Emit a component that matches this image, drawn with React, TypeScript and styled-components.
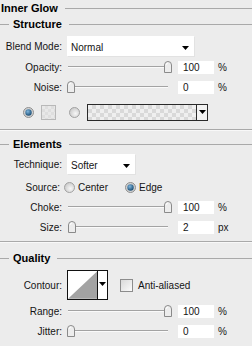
import styled, { createGlobalStyle } from 'styled-components'

const GlobalStyle = createGlobalStyle`
  html, body {
    margin: 0;
    padding: 0;
    background: #ececec;
  }
  body {
    font-family: "Liberation Sans", Arial, sans-serif;
    font-size: 10px;
    color: #141414;
  }
`

const Panel = styled.div`
  width: 252px;
  height: 346px;
  background: #ececec;
  display: flex;
  flex-direction: column;
  overflow: hidden;
`

const Header = styled.div`
  height: 16px;
  display: flex;
  align-items: center;
  gap: 7px;
  padding-left: 1px;
  font-weight: bold;
  font-size: 11px;
  color: #000;
  &::after {
    content: '';
    flex: 1;
    border-top: 1px solid #a9a9a9;
  }
`

const Legend = styled.div<{ $mt: number }>`
  height: 16px;
  margin-top: ${p => p.$mt}px;
  display: flex;
  align-items: center;
  gap: 4px;
  font-weight: bold;
  font-size: 11px;
  color: #000;
  &::before {
    content: '';
    width: 9px;
    border-top: 1px solid #a9a9a9;
  }
  &::after {
    content: '';
    flex: 1;
    margin-left: 3px;
    border-top: 1px solid #a9a9a9;
  }
`

const Divider = styled.div<{ $mt: number }>`
  margin-top: ${p => p.$mt}px;
  border-top: 1px solid #a9a9a9;
  border-bottom: 1px solid #f8f8f8;
`

const Row = styled.div<{ $mt: number; $h: number; $indent?: number }>`
  display: flex;
  align-items: center;
  margin-top: ${p => p.$mt}px;
  height: ${p => p.$h}px;
  padding-left: ${p => p.$indent ?? 0}px;
`

const Label = styled.span<{ $w?: number; $gap?: number }>`
  flex: none;
  width: ${p => p.$w ?? 62}px;
  margin-right: ${p => p.$gap ?? 5}px;
  text-align: right;
  white-space: nowrap;
`

const Select = styled.div<{ $w: number }>`
  width: ${p => p.$w}px;
  height: 20px;
  box-sizing: border-box;
  background: #fff;
  display: flex;
  align-items: center;
  padding: 3px 5px 0 4px;
  box-shadow: 1px 1px 0 #e2e2e2;
  span {
    flex: 1;
  }
`

const SliderBox = styled.div`
  position: relative;
  width: 106px;
  height: 12px;
  display: flex;
  align-items: center;
`

const Track = styled.div`
  margin: 0 5px 0 1px;
  flex: 1;
  border-top: 1px solid #a3a3a3;
  border-bottom: 1px solid #fafafa;
`

const Thumb = styled.svg`
  position: absolute;
  top: 0;
`

const NumberBox = styled.div`
  margin-left: 5px;
  width: 36px;
  height: 13px;
  box-sizing: border-box;
  background: #fff;
  padding-left: 5px;
  line-height: 14px;
`

const Unit = styled.span`
  margin-left: 4px;
`

const Swatch = styled.div`
  width: 15px;
  height: 15px;
  box-sizing: border-box;
  margin-left: 7px;
  border: 1px solid #b8b8b8;
  background: repeating-conic-gradient(#dedede 0 25%, #e8e8e8 0 50%) 0 0 / 6px 6px;
`

const GradientBox = styled.div`
  margin-left: 7px;
  width: 121px;
  height: 17px;
  box-sizing: border-box;
  border: 1px solid #2a2a2a;
  display: flex;
`

const Checker = styled.div`
  flex: 1;
  background: repeating-conic-gradient(#d9d9d9 0 25%, #efefef 0 50%) 0 0 / 8px 8px;
`

const ArrowCell = styled.div`
  width: 10px;
  border-left: 1px solid #2a2a2a;
  background: #f2f2f2;
  display: flex;
  align-items: center;
  justify-content: center;
`

const RadioOption = styled.label<{ $ml?: number }>`
  display: flex;
  align-items: center;
  gap: 3px;
  margin-left: ${p => p.$ml ?? 0}px;
`

const ContourBox = styled.div`
  width: 41px;
  height: 30px;
  box-sizing: border-box;
  border: 1px solid #111;
  display: flex;
  background: #fff;
`

const ContourArrow = styled.div`
  width: 10px;
  border-left: 1px solid #111;
  display: flex;
  justify-content: center;
  padding-top: 11px;
  box-sizing: border-box;
`

const CheckOption = styled.label`
  display: flex;
  align-items: center;
  gap: 5px;
  margin-left: 12px;
`

const CheckBox = styled.span`
  width: 13px;
  height: 13px;
  box-sizing: border-box;
  border: 1px solid #8c8c8c;
  background: linear-gradient(135deg, #d9d9d9, #fbfbfb);
`

function Arrow() {
  return (
    <svg width="7" height="4" viewBox="0 0 7 4">
      <polygon points="0,0 7,0 3.5,4" fill="#000" />
    </svg>
  )
}

function Radio({ on }: { on?: boolean }) {
  return on ? (
    <svg width="11" height="11" viewBox="0 0 11 11">
      <defs>
        <radialGradient id="rOn" cx="0.4" cy="0.35" r="0.7">
          <stop offset="0" stopColor="#7fb6de" />
          <stop offset="1" stopColor="#14476e" />
        </radialGradient>
      </defs>
      <circle cx="5.5" cy="5.5" r="5" fill="#d2d2d2" stroke="#8f8f8f" />
      <circle cx="5.5" cy="5.5" r="3.2" fill="url(#rOn)" />
    </svg>
  ) : (
    <svg width="11" height="11" viewBox="0 0 11 11">
      <defs>
        <radialGradient id="rOff" cx="0.6" cy="0.6" r="0.7">
          <stop offset="0" stopColor="#f7f7f7" />
          <stop offset="1" stopColor="#c4c4c4" />
        </radialGradient>
      </defs>
      <circle cx="5.5" cy="5.5" r="5" fill="url(#rOff)" stroke="#a2a2a2" />
    </svg>
  )
}

// pos is 0..100 along the track
function Slider({ pos }: { pos: number }) {
  return (
    <SliderBox>
      <Track />
      <Thumb width="8" height="12" viewBox="0 0 8 12" style={{ left: Math.round(pos * 0.97) }}>
        <path d="M0.5 4 Q0.5 0.5 4 0.5 Q7.5 0.5 7.5 4 V11.5 H0.5 Z" fill="#ededed" stroke="#8a8a8a" />
        <path d="M2 4 Q2 2 4 2" fill="none" stroke="#fff" />
      </Thumb>
    </SliderBox>
  )
}

function SliderRow({ label, value, pos, unit, mt }: { label: string; value: number; pos: number; unit: string; mt: number }) {
  return (
    <Row $mt={mt} $h={18}>
      <Label>{label}</Label>
      <Slider pos={pos} />
      <NumberBox>{value}</NumberBox>
      <Unit>{unit}</Unit>
    </Row>
  )
}

export default function App() {
  return (
    <Panel>
      <GlobalStyle />
      <Header>Inner Glow</Header>
      <Legend $mt={0}>Structure</Legend>
      <Row $mt={4} $h={20}>
        <Label>Blend Mode:</Label>
        <Select $w={127}>
          <span>Normal</span>
          <Arrow />
        </Select>
      </Row>
      <SliderRow label="Opacity:" value={100} pos={100} unit="%" mt={2} />
      <SliderRow label="Noise:" value={0} pos={0} unit="%" mt={2} />
      <Row $mt={7} $h={18} $indent={23}>
        <Radio on />
        <Swatch />
        <RadioOption $ml={13}>
          <Radio />
        </RadioOption>
        <GradientBox>
          <Checker />
          <ArrowCell>
            <Arrow />
          </ArrowCell>
        </GradientBox>
      </Row>
      <Divider $mt={8} />

      <Legend $mt={5}>Elements</Legend>
      <Row $mt={2} $h={20}>
        <Label>Technique:</Label>
        <Select $w={68}>
          <span>Softer</span>
          <Arrow />
        </Select>
      </Row>
      <Row $mt={4} $h={18}>
        <Label $w={60} $gap={4}>Source:</Label>
        <RadioOption>
          <Radio />
          Center
        </RadioOption>
        <RadioOption $ml={17}>
          <Radio on />
          Edge
        </RadioOption>
      </Row>
      <SliderRow label="Choke:" value={100} pos={100} unit="%" mt={2} />
      <SliderRow label="Size:" value={2} pos={1} unit="px" mt={2} />
      <Divider $mt={5} />

      <Legend $mt={7}>Quality</Legend>
      <Row $mt={4} $h={30}>
        <Label>Contour:</Label>
        <ContourBox>
          <svg width="30" height="28" viewBox="0 0 30 28">
            <polygon points="0,28 30,0 30,28" fill="#a3a3a3" />
          </svg>
          <ContourArrow>
            <Arrow />
          </ContourArrow>
        </ContourBox>
        <CheckOption>
          <CheckBox />
          Anti-aliased
        </CheckOption>
      </Row>
      <SliderRow label="Range:" value={100} pos={100} unit="%" mt={2} />
      <SliderRow label="Jitter:" value={0} pos={0} unit="%" mt={2} />
    </Panel>
  )
}
